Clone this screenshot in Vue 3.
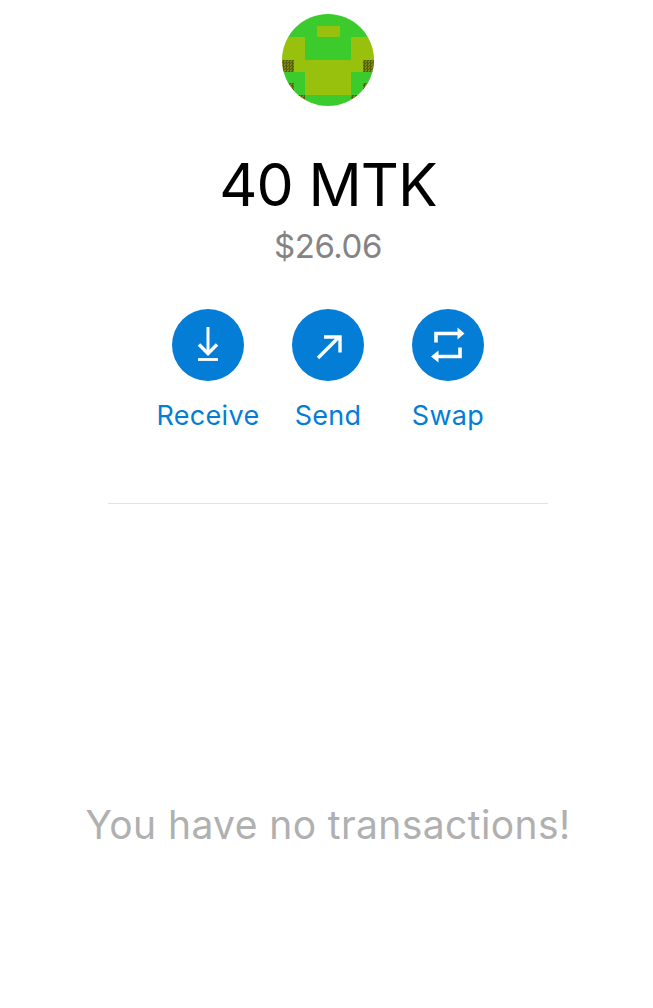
<template>
  <div class="page">
    <div class="avatar">
      <div class="avatar-grid">
        <span v-for="(c, i) in cells" :key="i" :class="'cell-' + c"></span>
      </div>
    </div>
    <h1 class="amount">40 MTK</h1>
    <div class="fiat">$26.06</div>

    <div class="actions">
      <div class="action">
        <div class="action-btn">
          <svg viewBox="0 0 72 72" width="72" height="72" fill="none" stroke="#fff" stroke-width="3">
            <path d="M36 18V44" />
            <path d="M27 35.5L36 44.5L45 35.5" stroke-width="3.4" />
            <path d="M26 50.5H46" stroke-width="2.8" />
          </svg>
        </div>
        <span>Receive</span>
      </div>
      <div class="action">
        <div class="action-btn">
          <svg viewBox="0 0 72 72" width="72" height="72" fill="none" stroke="#fff" stroke-width="3.4">
            <path d="M26 49L47 28" />
            <path d="M32 28H48V43.5" />
          </svg>
        </div>
        <span>Send</span>
      </div>
      <div class="action">
        <div class="action-btn">
          <svg viewBox="0 0 72 72" width="72" height="72" fill="none" stroke="#fff" stroke-width="3.6">
            <path d="M24 33.5V24.5H46" />
            <path d="M48 38.5V47.5H26" />
            <path d="M45.5 18.5L52.5 24.5L45.5 30.5Z" fill="#fff" stroke="none" />
            <path d="M26.5 41.5L19 47.5L26.5 53.5Z" fill="#fff" stroke="none" />
          </svg>
        </div>
        <span>Swap</span>
      </div>
    </div>

    <div class="divider"></div>
    <div class="empty">You have no transactions!</div>
  </div>
</template>

<script setup>
const rows = [
  'gggggggg',
  'gggyyggg',
  'yyggggyy',
  'yyggggyy',
  'dyyyyyyd',
  'ggyyyygg',
  'dgyyyygd',
  'gdggggdg'
]
const cells = rows.join('').split('')
</script>

<style>
html, body { background: #fff; }
</style>

<style scoped>
.page { display: flex; flex-direction: column; align-items: center; height: 1008px; box-sizing: border-box; padding: 14px 0 0 3px; font-family: "Inter", "Lato", sans-serif; overflow: hidden; }
.avatar { width: 92px; height: 92px; border-radius: 50%; overflow: hidden; }
.avatar-grid { display: grid; grid-template-columns: repeat(8, 11.5px); grid-auto-rows: 11.5px; }
.cell-g { background: #3ccb2c; }
.cell-y { background: #98c10d; }
.cell-d { background: repeating-conic-gradient(#55600c 0 25%, #7d8a12 0 50%) 0 0 / 3px 3px; }
.amount { margin: 44px 0 0; font-size: 59px; line-height: 70px; font-weight: 400; color: #000; letter-spacing: -0.9px; }
.fiat { margin-top: 6px; font-size: 33px; line-height: 40px; color: #848484; letter-spacing: -0.4px; }
.actions { display: flex; margin-top: 43px; }
.action { width: 120px; display: flex; flex-direction: column; align-items: center; color: #037dd6; font-size: 27px; line-height: 34px; letter-spacing: 0.3px; }
.action-btn { width: 72px; height: 72px; border-radius: 50%; background: #037dd6; margin-bottom: 18px; }
.action-btn svg { display: block; }
.divider { width: 440px; height: 1px; background: #e3e3e3; margin-top: 70px; }
.empty { margin-top: 296px; font-size: 39px; line-height: 50px; color: #b0b0b0; letter-spacing: 0.4px; }
</style>
